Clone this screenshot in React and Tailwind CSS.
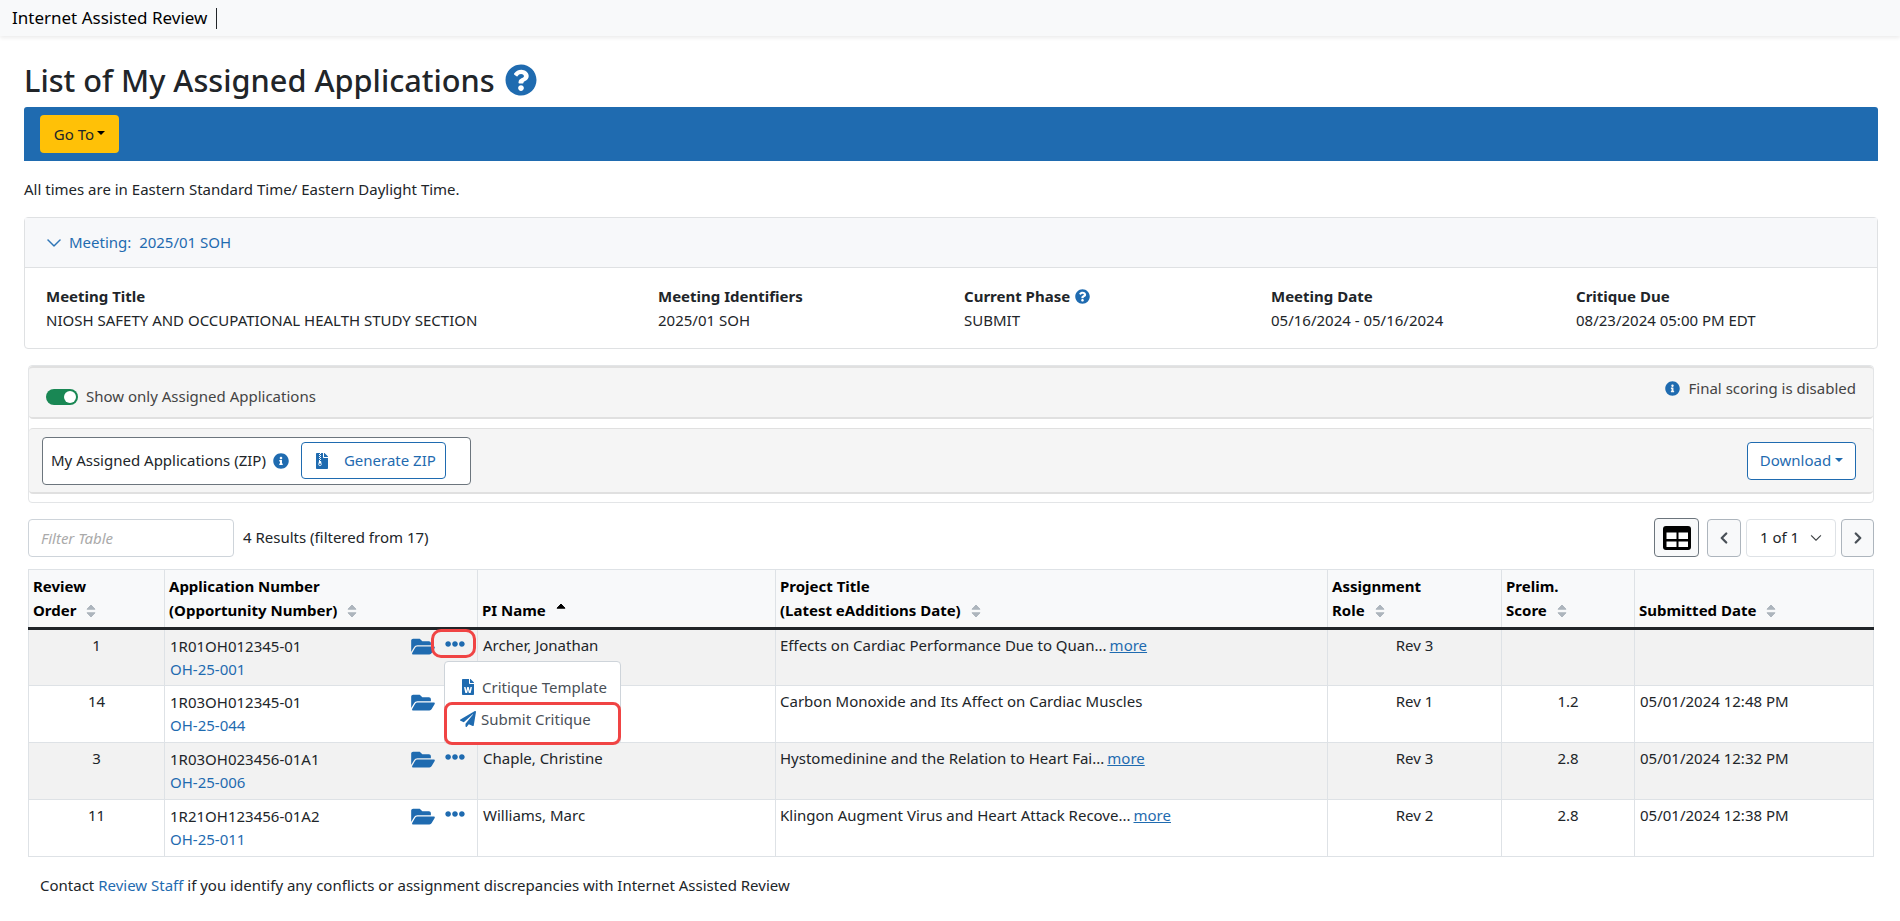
import React from 'react';
import { FaQuestionCircle, FaInfoCircle, FaFolderOpen, FaEllipsisH, FaFileWord, FaPaperPlane, FaFileArchive } from 'react-icons/fa';
import { BsChevronDown, BsChevronLeft, BsChevronRight } from 'react-icons/bs';

const rows = [
  { order: '1', app: '1R01OH012345-01', opp: 'OH-25-001', pi: 'Archer, Jonathan', title: 'Effects on Cardiac Performance Due to Quan...', more: true, role: 'Rev 3', score: '', date: '' },
  { order: '14', app: '1R03OH012345-01', opp: 'OH-25-044', pi: '', title: 'Carbon Monoxide and Its Affect on Cardiac Muscles', more: false, role: 'Rev 1', score: '1.2', date: '05/01/2024 12:48 PM' },
  { order: '3', app: '1R03OH023456-01A1', opp: 'OH-25-006', pi: 'Chaple, Christine', title: 'Hystomedinine and the Relation to Heart Fai...', more: true, role: 'Rev 3', score: '2.8', date: '05/01/2024 12:32 PM' },
  { order: '11', app: '1R21OH123456-01A2', opp: 'OH-25-011', pi: 'Williams, Marc', title: 'Klingon Augment Virus and Heart Attack Recove...', more: true, role: 'Rev 2', score: '2.8', date: '05/01/2024 12:38 PM' },
];

function Sort() {
  return (
    <svg width="10" height="14" viewBox="0 0 10 14" className="inline ml-[10px] relative top-[-1px]" fill="#adb5bd" stroke="#adb5bd" strokeLinejoin="round">
      <path d="M5 1 9 5.2H1Z" />
      <path d="M1 8.8H9L5 13Z" />
    </svg>
  );
}

function SortUp() {
  return (
    <svg width="10" height="14" viewBox="0 0 10 14" className="inline ml-[10px] relative top-[-2px]" fill="#000" stroke="#000" strokeLinejoin="round">
      <path d="M5 1 9 5.2H1Z" />
    </svg>
  );
}

function Th({ line1, line2, sort }) {
  return (
    <th className="border-x border-[#dee2e6] px-[4px] pb-[5px] align-bottom text-left font-bold leading-[24px] text-black">
      {line1 && <div>{line1}</div>}
      <div>{line2}{sort}</div>
    </th>
  );
}

function MeetingCol({ label, value, className, help }) {
  return (
    <div className={className}>
      <div className="font-bold leading-[24px] flex items-center gap-[5px]">
        {label}
        {help && <FaQuestionCircle className="text-[#1f6bb0] text-[15px]" />}
      </div>
      <div className="leading-[24px] text-[#212529]">{value}</div>
    </div>
  );
}

export default function App() {
  return (
    <div className="min-h-[921px] bg-white text-[15px] text-[#212529] font-['Noto_Sans',sans-serif]">
      <nav className="h-[36px] bg-[#f8f9fa] shadow-[0_2px_4px_rgba(0,0,0,0.08)] flex items-center pl-[12px] text-[17px] text-black">
        <span>Internet Assisted Review</span>
        <span className="ml-[9px] w-px h-[21px] bg-[#212529]"></span>
      </nav>

      <div className="pl-[24px] pr-[22px]">
        <h1 className="h-[71px] flex items-center gap-[10px] text-[30.7px] font-medium pt-[17px]">
          List of My Assigned Applications
          <FaQuestionCircle className="text-[#1f6bb0] text-[32px]" />
        </h1>

        <div className="h-[54px] bg-[#1f6bb0] rounded-t-[3px] flex items-center pl-[16px]">
          <button className="w-[79px] h-[38px] bg-[#ffc107] rounded-[4px] flex items-center justify-center gap-[3px] text-[#212529]">
            Go To
            <span className="w-0 h-0 border-x-[4px] border-x-transparent border-t-[4px] border-t-black mb-[2px]"></span>
          </button>
        </div>

        <p className="mt-[18px] leading-[21px]">All times are in Eastern Standard Time/ Eastern Daylight Time.</p>

        <section className="mt-[17px] border border-[#dfe1e3] rounded-[4px]">
          <div className="h-[50px] bg-[#f7f8fa] border-b border-[#dfe1e3] flex items-center pl-[21px] gap-[7px] text-[#1f6bb0]">
            <BsChevronDown className="text-[16px] stroke-[0.5px]" />
            <span>Meeting:&nbsp; 2025/01 SOH</span>
          </div>
          <div className="h-[80px] flex pl-[21px] pt-[16px]">
            <MeetingCol className="w-[612px]" label="Meeting Title" value="NIOSH SAFETY AND OCCUPATIONAL HEALTH STUDY SECTION" />
            <MeetingCol className="w-[306px]" label="Meeting Identifiers" value="2025/01 SOH" />
            <MeetingCol className="w-[307px]" label="Current Phase" value="SUBMIT" help />
            <MeetingCol className="w-[305px]" label="Meeting Date" value="05/16/2024 - 05/16/2024" />
            <MeetingCol className="w-[300px]" label="Critique Due" value="08/23/2024 05:00 PM EDT" />
          </div>
        </section>

        <div className="mx-[4px] mt-[16px] h-[138px] border border-[#e3e5e7] rounded-[4px]">
          <div className="h-[53px] bg-[#f5f5f5] border-y-2 border-[#e0e0e0] rounded-[4px] flex justify-between pl-[17px] pr-[17px]">
            <div className="flex items-center gap-[8px] pt-[8px] text-[#444]">
              <span className="w-[32px] h-[16px] rounded-full bg-[#198754] flex items-center justify-end pr-[2px]">
                <span className="w-[12px] h-[12px] rounded-full bg-white"></span>
              </span>
              Show only Assigned Applications
            </div>
            <div className="flex items-center gap-[9px] h-[40px] text-[#444]">
              <FaInfoCircle className="text-[#1f6bb0] text-[15px]" />
              Final scoring is disabled
            </div>
          </div>
          <div className="mt-[9px] h-[66px] bg-[#f5f5f5] border-t border-b-2 border-[#e0e0e0] rounded-[4px] flex items-center justify-between pl-[13px] pr-[17px]">
            <div className="w-[429px] h-[48px] bg-white border border-[#6c757d] rounded-[4px] flex items-center pl-[8px]">
              <span>My Assigned Applications (ZIP)</span>
              <FaInfoCircle className="ml-[7px] text-[#1f6bb0] text-[16px]" />
              <button className="ml-[12px] w-[145px] h-[37px] border border-[#1f6bb0] rounded-[4px] flex items-center pl-[12px] gap-[14px] text-[#1f6bb0]">
                <FaFileArchive className="text-[16px]" />
                Generate ZIP
              </button>
            </div>
            <button className="w-[109px] h-[38px] bg-white border border-[#1f6bb0] rounded-[4px] flex items-center justify-center gap-[4px] text-[#1f6bb0]">
              Download
              <span className="w-0 h-0 border-x-[4px] border-x-transparent border-t-[4px] border-t-[#1f6bb0] mb-[2px]"></span>
            </button>
          </div>
        </div>

        <div className="mx-[4px] mt-[15px] h-[39px] flex items-center">
          <input placeholder="Filter Table" className="w-[206px] h-[38px] border border-[#ced4da] rounded-[4px] pl-[12px] italic placeholder:text-[#aaa] outline-none" />
          <span className="ml-[9px]">4 Results (filtered from 17)</span>
          <div className="ml-auto flex items-center">
            <button className="w-[45px] h-[39px] bg-[#f8f9fa] border border-[#6c757d] rounded-[4px] flex items-center justify-center">
              <svg width="28" height="24" viewBox="0 0 28 24">
                <rect width="28" height="24" rx="3" fill="#000" />
                <rect x="3.5" y="6.5" width="10" height="6.5" fill="#fff" />
                <rect x="15.5" y="6.5" width="9.5" height="6.5" fill="#fff" />
                <rect x="3.5" y="15.5" width="10" height="5.5" fill="#fff" />
                <rect x="15.5" y="15.5" width="9.5" height="5.5" fill="#fff" />
              </svg>
            </button>
            <button className="ml-[8px] w-[34px] h-[38px] bg-[#f8f9fa] border border-[#adb5bd] rounded-[4px] flex items-center justify-center text-[#495057]">
              <BsChevronLeft className="text-[12px] stroke-2" />
            </button>
            <div className="ml-[5px] w-[90px] h-[38px] border border-[#dee2e6] rounded-[4px] flex items-center justify-between pl-[13px] pr-[13px]">
              1 of 1
              <BsChevronDown className="text-[12px] stroke-[0.5px]" />
            </div>
            <button className="ml-[5px] w-[33px] h-[38px] bg-[#f8f9fa] border border-[#adb5bd] rounded-[4px] flex items-center justify-center text-[#495057]">
              <BsChevronRight className="text-[12px] stroke-2" />
            </button>
          </div>
        </div>

        <div className="relative mx-[4px] mt-[12px]">
          <table className="w-full table-fixed border-collapse">
            <colgroup>
              <col className="w-[136px]" />
              <col className="w-[313px]" />
              <col className="w-[298px]" />
              <col className="w-[552px]" />
              <col className="w-[174px]" />
              <col className="w-[133px]" />
              <col />
            </colgroup>
            <thead className="bg-[#f8f9fa]">
              <tr className="h-[59px] border-t border-[#dee2e6] border-b-[3px] border-b-[#212529]">
                <Th line1="Review" line2="Order" sort={<Sort />} />
                <Th line1="Application Number" line2="(Opportunity Number)" sort={<Sort />} />
                <Th line2="PI Name" sort={<SortUp />} />
                <Th line1="Project Title" line2="(Latest eAdditions Date)" sort={<Sort />} />
                <Th line1="Assignment" line2="Role" sort={<Sort />} />
                <Th line1="Prelim." line2="Score" sort={<Sort />} />
                <Th line2="Submitted Date" sort={<Sort />} />
              </tr>
            </thead>
            <tbody>
              {rows.map((r, i) => (
                <tr key={r.order} className={`h-[57px] border-b border-[#dee2e6] ${i % 2 === 0 ? 'bg-[#f2f2f2]' : 'bg-white'}`}>
                  <td className="border-x border-[#dee2e6] align-top text-center pt-[5px] leading-[21px]">{r.order}</td>
                  <td className="border-x border-[#dee2e6] align-top pl-[5px] pr-[1px] pt-[4px]">
                    <div className="flex">
                      <div className="flex-1">
                        <div className="leading-[24px]">{r.app}</div>
                        <div className="leading-[22px] text-[#1f6bb0]">{r.opp}</div>
                      </div>
                      <FaFolderOpen className="mt-[2px] mr-[10px] text-[#1f6bb0] text-[21px] w-[24px]" />
                      <FaEllipsisH className="mr-[11px] text-[#1f6bb0] text-[20px]" />
                    </div>
                  </td>
                  <td className="border-x border-[#dee2e6] align-top pl-[5px] pt-[5px] leading-[21px]">{r.pi}</td>
                  <td className="border-x border-[#dee2e6] align-top pl-[4px] pt-[5px] leading-[21px]">
                    {r.title}
                    {r.more && <a className="ml-[3px] text-[#1f6bb0] underline">more</a>}
                  </td>
                  <td className="border-x border-[#dee2e6] align-top text-center pt-[5px] leading-[21px]">{r.role}</td>
                  <td className="border-x border-[#dee2e6] align-top text-center pt-[5px] leading-[21px]">{r.score}</td>
                  <td className="border-x border-[#dee2e6] align-top pl-[5px] pt-[5px] leading-[21px]">{r.date}</td>
                </tr>
              ))}
            </tbody>
          </table>

          {/* open row menu and the red callouts over it */}
          <div className="absolute left-[403px] top-[60px] w-[45px] h-[29px] border-[3px] border-[#f04444] rounded-[10px]"></div>
          <div className="absolute left-[416px] top-[92px] w-[177px] h-[83px] bg-white border border-[#ced4da] rounded-[4px]">
            <div className="flex items-center h-[40px] pl-[15px] pt-[10px] gap-[6px] text-[#495057]">
              <FaFileWord className="text-[#1f6bb0] text-[16px]" />
              Critique Template
            </div>
            <div className="flex items-center h-[34px] pl-[15px] gap-[5px] text-[#495057]">
              <FaPaperPlane className="text-[#1f6bb0] text-[16px]" />
              Submit Critique
            </div>
          </div>
          <div className="absolute left-[416px] top-[133px] w-[177px] h-[43px] border-[3px] border-[#f04444] rounded-[8px]"></div>
        </div>

        <p className="mt-[18px] ml-[16px] leading-[21px]">
          Contact <a className="text-[#1f6bb0]">Review Staff</a> if you identify any conflicts or assignment discrepancies with Internet Assisted Review
        </p>
      </div>
    </div>
  );
}
